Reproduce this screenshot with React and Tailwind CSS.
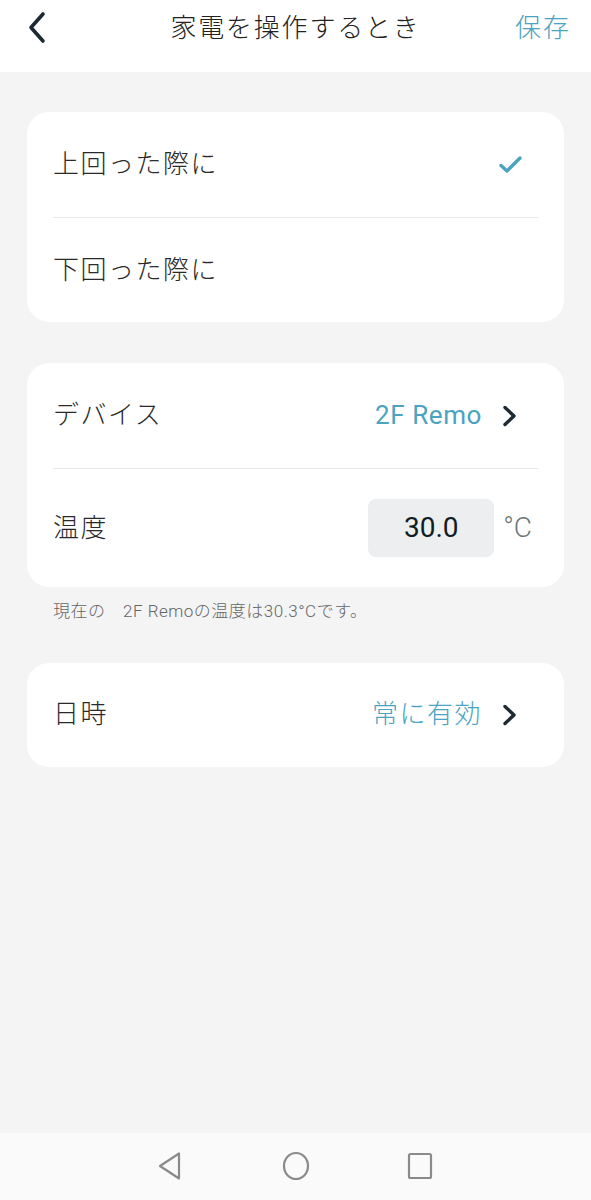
import React from 'react'

const teal = 'text-[#4aa3c0]'

const Chevron = () => (
  <svg width="16" height="24" viewBox="0 0 16 24" fill="none">
    <path d="M3 3.5 L12 12 L3 20.5" stroke="#1c2a33" strokeWidth="3.4" strokeLinecap="round" strokeLinejoin="round" />
  </svg>
)

const Row = ({ children, className = '' }) => (
  <div className={`flex items-center justify-between px-[26px] ${className}`}>{children}</div>
)

const Divider = () => <div className="mx-[26px] h-px bg-[#e8e8e8]" />

const App = () => {
  return (
    <div
      className="w-[591px] h-[1200px] flex flex-col bg-[#f4f4f4] text-[#222] font-light"
      style={{ fontFamily: 'Roboto, "Noto Sans CJK JP", sans-serif' }}
    >
      {/* header */}
      <header className="h-[72px] bg-white flex items-center justify-between pl-[26px] pr-[20px] relative">
        <svg width="24" height="34" viewBox="0 0 24 34" fill="none" className="-mt-[16px]">
          <path d="M17 3 L5 16.5 L17 30" stroke="#1c2a33" strokeWidth="3.6" strokeLinecap="round" strokeLinejoin="round" />
        </svg>
        <h1 className="absolute left-0 right-0 top-[10px] text-center text-[26px] tracking-[1.8px] leading-[36px] font-light text-[#222]">
          家電を操作するとき
        </h1>
        <button className={`-mt-[16px] text-[26px] tracking-[2px] ${teal}`}>保存</button>
      </header>

      <main className="flex-1 flex flex-col px-[27px] pt-[40px]">
        <section className="bg-white rounded-[22px]">
          <Row className="h-[105px]">
            <span className="text-[26px] tracking-[1.5px] text-[#2a2a2a]">上回った際に</span>
            <svg width="26" height="20" viewBox="0 0 26 20" fill="none" className="mr-[14px]">
              <path d="M3 10.5 L9 16 L22 3" stroke="#4aa3c0" strokeWidth="3.4" strokeLinecap="round" strokeLinejoin="round" />
            </svg>
          </Row>
          <Divider />
          <Row className="h-[104px]">
            <span className="text-[26px] tracking-[1.5px] text-[#2a2a2a]">下回った際に</span>
          </Row>
        </section>

        <section className="bg-white rounded-[22px] mt-[41px]">
          <Row className="h-[105px]">
            <span className="text-[26px] tracking-[1.5px] text-[#2a2a2a]">デバイス</span>
            <div className="flex items-center gap-[20px] mr-[20px]">
              <span className={`text-[26px] tracking-[0.6px] font-normal ${teal}`}>2F Remo</span>
              <Chevron />
            </div>
          </Row>
          <Divider />
          <Row className="h-[118px]">
            <span className="text-[26px] tracking-[1.5px] text-[#2a2a2a]">温度</span>
            <div className="flex items-center gap-[9px] mr-[6px]">
              <div className="w-[126px] h-[58px] rounded-[8px] bg-[#eceef0] flex items-center justify-center text-[28px] font-normal text-[#111d24]">
                30.0
              </div>
              <span className="text-[28px] text-[#6b7478]">°C</span>
            </div>
          </Row>
        </section>

        <p className="mt-[12px] px-[26px] text-[17px] tracking-[0.5px] text-[#666]">
          現在の　2F Remoの温度は30.3°Cです。
        </p>

        <section className="bg-white rounded-[22px] mt-[38px]">
          <Row className="h-[104px]">
            <span className="text-[26px] tracking-[1.5px] text-[#2a2a2a]">日時</span>
            <div className="flex items-center gap-[20px] mr-[20px]">
              <span className={`text-[26px] tracking-[1.5px] ${teal}`}>常に有効</span>
              <Chevron />
            </div>
          </Row>
        </section>
      </main>

      {/* android nav bar */}
      <nav className="h-[67px] bg-[#fafafa] flex items-center justify-center gap-[94px] pb-[1px]">
        <svg width="30" height="32" viewBox="0 0 30 32" fill="none">
          <path d="M22 3.5 L22 28.5 L3 16 Z" stroke="#8a8a8a" strokeWidth="2.2" strokeLinejoin="round" />
        </svg>
        <svg width="30" height="32" viewBox="0 0 30 32" fill="none">
          <ellipse cx="15" cy="16" rx="12" ry="13" stroke="#8a8a8a" strokeWidth="2.2" />
        </svg>
        <svg width="30" height="32" viewBox="0 0 30 32" fill="none">
          <rect x="4" y="4" width="22" height="24" rx="1.5" stroke="#8a8a8a" strokeWidth="2.2" />
        </svg>
      </nav>
    </div>
  )
}

export default App
